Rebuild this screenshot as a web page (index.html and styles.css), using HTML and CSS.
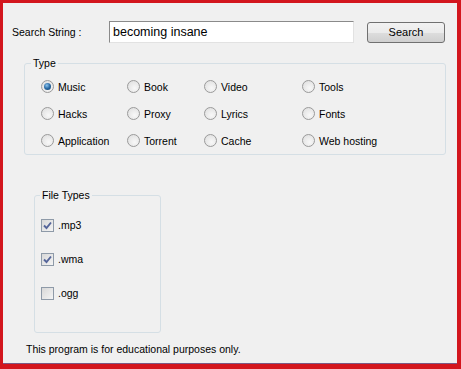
FILE: index.html
```html
<!DOCTYPE html>
<html>
<head>
    <title>Search</title>
    <link rel="stylesheet" href="styles.css">
</head>
<body>
    <div class="window">
        <div class="panel">
            <div class="search-row">
                <label class="search-label" for="query">Search String :</label>
                <input type="text" id="query" class="search-input" value="becoming insane">
                <button class="search-btn">Search</button>
            </div>

            <fieldset class="group type-group">
                <legend>Type</legend>
                <div class="radio-grid">
                    <label class="opt"><span class="radio checked"></span>Music</label>
                    <label class="opt"><span class="radio"></span>Book</label>
                    <label class="opt"><span class="radio"></span>Video</label>
                    <label class="opt"><span class="radio"></span>Tools</label>
                    <label class="opt"><span class="radio"></span>Hacks</label>
                    <label class="opt"><span class="radio"></span>Proxy</label>
                    <label class="opt"><span class="radio"></span>Lyrics</label>
                    <label class="opt"><span class="radio"></span>Fonts</label>
                    <label class="opt"><span class="radio"></span>Application</label>
                    <label class="opt"><span class="radio"></span>Torrent</label>
                    <label class="opt"><span class="radio"></span>Cache</label>
                    <label class="opt"><span class="radio"></span>Web hosting</label>
                </div>
            </fieldset>

            <fieldset class="group file-group">
                <legend>File Types</legend>
                <div class="check-list">
                    <label class="opt check-row"><span class="check"><svg width="9" height="9" viewBox="0 0 9 9"><path d="M1 4.5 L3.5 7 L8 1.5" fill="none" stroke="#55659a" stroke-width="1.9"/></svg></span>.mp3</label>
                    <label class="opt check-row"><span class="check"><svg width="9" height="9" viewBox="0 0 9 9"><path d="M1 4.5 L3.5 7 L8 1.5" fill="none" stroke="#55659a" stroke-width="1.9"/></svg></span>.wma</label>
                    <label class="opt check-row"><span class="check"></span>.ogg</label>
                </div>
            </fieldset>

            <p class="note">This program is for educational purposes only.</p>
        </div>
    </div>
</body>
</html>
```

FILE: styles.css
```css
body {
    margin: 0;
    font-family: "Liberation Sans", Arial, sans-serif;
    font-size: 10.5px;
    color: #000;
}
.window {
    width: 461px;
    height: 369px;
    box-sizing: border-box;
    border-top: 3px solid #d3161e;
    border-left: 3px solid #d3161e;
    border-right: 4px solid #d3161e;
    border-bottom: 5px solid #d3161e;
    display: flex;
    flex-direction: column;
}
.panel {
    flex: 1;
    background-color: #f0f0f0;
    border-bottom: 1px solid #7b5a84;
    padding-top: 18px;
}
.search-row {
    display: flex;
    align-items: center;
    height: 22px;
}
.search-label {
    margin-left: 9px;
    width: 97px;
}
.search-input {
    box-sizing: border-box;
    width: 245px;
    height: 22px;
    margin: 0;
    padding: 0 3px;
    border: 1px solid;
    border-color: #8a8a8a #e2e2e2 #e2e2e2 #8a8a8a;
    background: #fff;
    font-family: "Liberation Sans", Arial, sans-serif;
    font-size: 12.5px;
    color: #000;
}
.search-btn {
    box-sizing: border-box;
    margin-left: 13px;
    width: 78px;
    height: 21px;
    padding: 0;
    border: 1px solid #707070;
    border-radius: 3px;
    background: linear-gradient(#f2f2f2 0%, #ebebeb 50%, #dddddd 51%, #cfcfcf 100%);
    font-family: "Liberation Sans", Arial, sans-serif;
    font-size: 11px;
    color: #000;
}
.group {
    box-sizing: border-box;
    border: 1px solid #d5dfe5;
    border-radius: 3px;
    padding: 0;
    min-width: 0;
}
.group legend {
    padding: 0 2px;
    line-height: 13px;
}
.type-group {
    margin: 14px 0 0 21px;
    width: 422px;
    padding-top: 3px;
}
.type-group legend {
    margin-left: 6px;
}
.radio-grid {
    display: grid;
    grid-template-columns: 86px 77px 98px auto;
    grid-auto-rows: 27px;
    padding-left: 16px;
}
.opt {
    display: flex;
    align-items: center;
}
.radio {
    box-sizing: border-box;
    width: 13px;
    height: 13px;
    border-radius: 50%;
    border: 1px solid #9a9a9a;
    background: radial-gradient(circle at 60% 65%, #f8f8f8 0%, #dcdcdc 100%);
    margin-right: 4px;
    display: flex;
    align-items: center;
    justify-content: center;
}
.radio.checked::after {
    content: "";
    width: 7px;
    height: 7px;
    border-radius: 50%;
    background: radial-gradient(circle at 40% 35%, #8cc4ee 0%, #2a6aa4 50%, #0f3b63 100%);
}
.file-group {
    margin: 34px 0 0 31px;
    width: 127px;
    padding: 6px 0 22px 0;
}
.file-group legend {
    margin-left: 5px;
}
.check-list {
    padding-left: 6px;
}
.check-row {
    height: 34px;
}
.check {
    box-sizing: border-box;
    width: 13px;
    height: 13px;
    border: 1px solid #8e9aa8;
    background: linear-gradient(135deg, #d8d8d8 0%, #f4f4f4 100%);
    margin-right: 4px;
    display: flex;
    align-items: center;
    justify-content: center;
}
.note {
    margin: 9px 0 0 23px;
    line-height: 14px;
}
```
